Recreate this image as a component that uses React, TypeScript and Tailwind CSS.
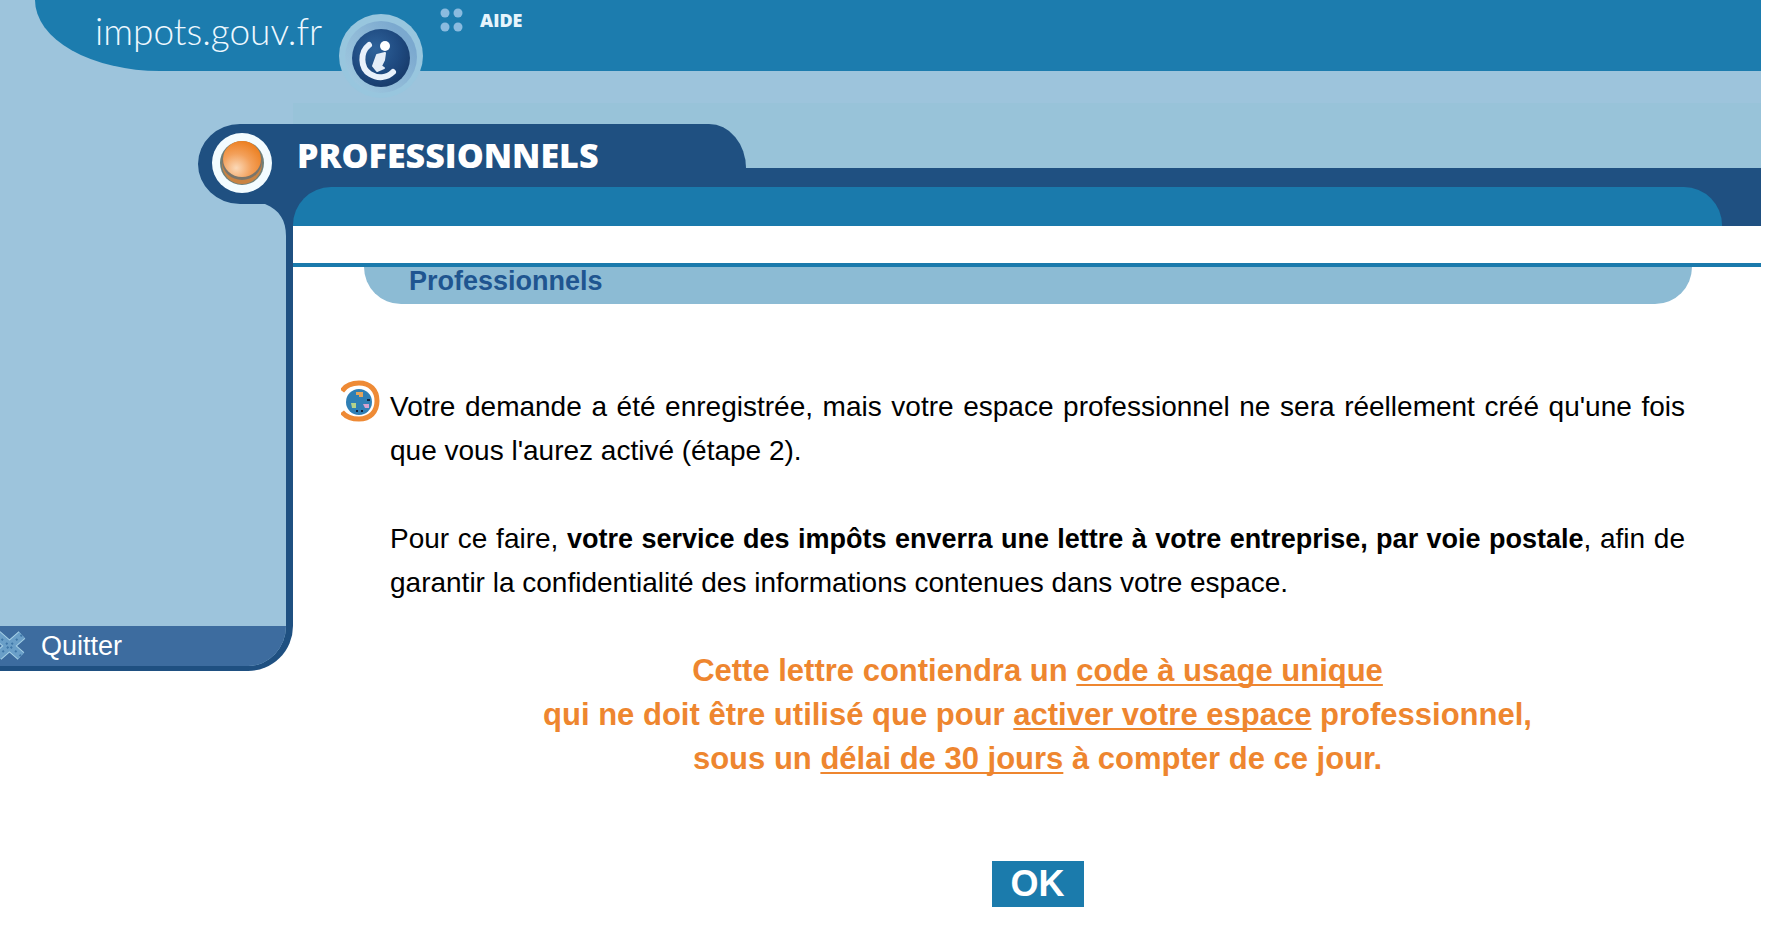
import { ReactNode } from "react";

function InfoBadge() {
  return (
    <svg viewBox="0 0 84 84" className="h-[84px] w-[84px] shrink-0" aria-hidden="true">
      <defs>
        <linearGradient id="badge-ring" x1="0.1" y1="0.8" x2="0.8" y2="0.2">
          <stop offset="0" stopColor="#9cc6de" />
          <stop offset="0.5" stopColor="#8fb9d7" />
          <stop offset="1" stopColor="#7ba9cf" />
        </linearGradient>
        <radialGradient id="badge-core" cx="0.4" cy="0.35" r="0.7">
          <stop offset="0" stopColor="#2f639b" />
          <stop offset="0.6" stopColor="#1f4a80" />
          <stop offset="1" stopColor="#173a69" />
        </radialGradient>
      </defs>
      <circle cx="42" cy="42" r="42" fill="#98c6de" />
      <circle cx="42" cy="43" r="36" fill="url(#badge-ring)" />
      <circle cx="42" cy="44" r="29" fill="url(#badge-core)" />
      <path
        d="M30 31C21 38 21 54 31 60C39 65 48 64 54 58"
        fill="none"
        stroke="#e9f1fb"
        strokeWidth="6"
        strokeLinecap="round"
      />
      <circle cx="46" cy="32" r="5" fill="#fff" />
      <path
        d="M38 41L46 39L45 46L42 52L45 54L38 57L34 52Z"
        fill="#e4edf8"
        stroke="#e4edf8"
        strokeWidth="2"
        strokeLinejoin="round"
      />
    </svg>
  );
}

function Dots() {
  return (
    <svg viewBox="0 0 24 24" className="h-6 w-6" aria-hidden="true">
      <g fill="#8abbdf">
        <circle cx="5" cy="5" r="4.5" />
        <circle cx="18" cy="5" r="4.5" />
        <circle cx="5" cy="19" r="4.5" />
        <circle cx="18" cy="19" r="4.5" />
      </g>
    </svg>
  );
}

// Rounded end of the section tab, with the neck that runs down into the side border
function TabCap() {
  return (
    <svg
      viewBox="0 0 95 102"
      className="relative z-10 h-[102px] w-[95px] overflow-visible"
      aria-hidden="true"
    >
      <defs>
        <radialGradient id="ball" cx="0.35" cy="0.75" r="0.8">
          <stop offset="0" stopColor="#fbd9b8" />
          <stop offset="0.5" stopColor="#f3a05a" />
          <stop offset="1" stopColor="#ec7d1c" />
        </radialGradient>
      </defs>
      <path
        d="M42 0H95V112H88C88 97 82 86 67 80H42A42 40 0 0 1 42 0Z"
        fill="#1f5081"
      />
      <circle cx="44" cy="39" r="30" fill="#f3fcff" />
      <circle cx="44" cy="39" r="22" fill="#6f8079" />
      <circle cx="44" cy="40" r="20" fill="#c98342" />
      <ellipse cx="44" cy="37" rx="20" ry="19" fill="#7a756a" />
      <ellipse cx="44" cy="35" rx="19" ry="18" fill="url(#ball)" />
    </svg>
  );
}

function GlobeIcon() {
  return (
    <svg viewBox="0 0 40 42" className="h-[42px] w-10 shrink-0" aria-hidden="true">
      <path
        d="M1 11C5 5 11 3 18 3C29 3 36 10 36 21C36 32 29 39 18 39C11 39 5 37 1 32"
        fill="none"
        stroke="#ee8a35"
        strokeWidth="5"
      />
      <circle cx="18" cy="22" r="13" fill="#2f7fb5" />
      <path d="M15 12H22V17H18V15H15Z" fill="#e3a55c" />
      <path d="M10 23H15V28H11Z" fill="#b4d28a" />
      <path d="M22 24H28V28H24Z" fill="#d7a3cf" />
      <path d="M26 19H29V21H26ZM15 30H17V32H15ZM20 30H22V32H20Z" fill="#10243f" />
    </svg>
  );
}

function CrossIcon() {
  return (
    <svg viewBox="0 0 26 30" className="h-[30px] w-[26px]" aria-hidden="true">
      <path d="M-3 4L21 25M22 4L-2 25" stroke="#a5d0e6" strokeWidth="10" />
      <path d="M-3 4L21 25M22 4L-2 25" stroke="#6a9fc8" strokeWidth="8" />
      <path
        d="M-3 4L21 25M22 4L-2 25"
        stroke="#3f77a8"
        strokeWidth="2"
        strokeDasharray="2 4"
      />
    </svg>
  );
}

function Key({ children }: { children: ReactNode }) {
  return (
    <span className="underline decoration-2 underline-offset-[3px] [text-decoration-skip-ink:none]">
      {children}
    </span>
  );
}

export default function App() {
  return (
    <div className="min-h-screen bg-white pr-[5px] font-['Liberation_Sans',Arial,sans-serif] text-[28px] text-black">
      <header className="bg-[#9dc4dc]">
        {/* Top bar */}
        <div className="ml-[35px] flex h-[71px] items-start gap-[17px] rounded-bl-[125px_71px] bg-[#1c7cae] pl-[60px]">
          <a
            href="#accueil"
            className="pt-[9px] font-['Lato',sans-serif] text-[37px] leading-[44px] font-light text-[#eef8ff]"
          >
            impots.gouv.fr
          </a>
          <div className="pt-[14px]">
            <InfoBadge />
          </div>
          <a
            href="#aide"
            className="flex items-center gap-4 pt-2 font-['Open_Sans',sans-serif] text-lg leading-6 font-extrabold text-[#e6f4fc]"
          >
            <Dots />
            AIDE
          </a>
        </div>

        {/* Section tab */}
        <div className="flex pt-8">
          <div className="flex w-[293px] shrink-0 justify-end pt-[21px]">
            <TabCap />
          </div>
          <div className="grow bg-[#98c3d9] pt-[21px]">
            <h1 className="h-11 w-[453px] rounded-tr-[37px_44px] bg-[#1f5081] pt-5 pl-1 font-['Open_Sans',sans-serif] text-[34px] leading-[22px] font-extrabold text-white">
              PROFESSIONNELS
            </h1>
            <div className="bg-[#1f5081] pt-[19px] pr-[39px]">
              <div className="h-[39px] rounded-t-[38px] bg-[#1a7aac]" />
            </div>
          </div>
        </div>
      </header>

      <div className="flex items-start">
        <aside className="flex min-h-[445px] w-[293px] shrink-0 flex-col justify-end overflow-hidden rounded-br-[45px] border-r-[7px] border-b-[5px] border-[#1f5081] bg-[#9dc4dc]">
          <a
            href="#quitter"
            className="flex items-center gap-[15px] bg-[#3d6c9f] text-[27px] leading-10 text-white"
          >
            <CrossIcon />
            Quitter
          </a>
        </aside>

        <main className="grow pt-[37px]">
          <div className="border-t-4 border-[#1a7aac] pr-[69px] pl-[71px]">
            <h2 className="h-[37px] rounded-b-[37px] bg-[#8cbbd4] pl-[45px] text-[27px] leading-7 font-bold text-[#1f5590]">
              Professionnels
            </h2>
          </div>

          <div className="flex items-start gap-[9px] pt-[76px] pr-[76px] pl-12">
            <GlobeIcon />
            <div className="flex grow flex-col gap-11 pt-[5px] leading-[44px]">
              <p className="text-justify">
                Votre demande a été enregistrée, mais votre espace professionnel
                ne sera réellement créé qu'une fois que vous l'aurez activé
                (étape 2).
              </p>
              <p className="text-justify">
                Pour ce faire,{" "}
                <b className="text-[27px]">
                  votre service des impôts enverra une lettre à votre
                  entreprise, par voie postale
                </b>
                , afin de garantir la confidentialité des informations contenues
                dans votre espace.
              </p>
              <p className="text-center text-[31px] font-bold text-[#ee862f]">
                Cette lettre contiendra un <Key>code à usage unique</Key>
                <br />
                qui ne doit être utilisé que pour{" "}
                <Key>activer votre espace</Key> professionnel,
                <br />
                sous un <Key>délai de 30 jours</Key> à compter de ce jour.
              </p>
              <button
                type="button"
                className="mt-9 self-center bg-[#1b7bac] px-[19px] text-4xl leading-[46px] font-bold text-white"
              >
                OK
              </button>
            </div>
          </div>
        </main>
      </div>
    </div>
  );
}
